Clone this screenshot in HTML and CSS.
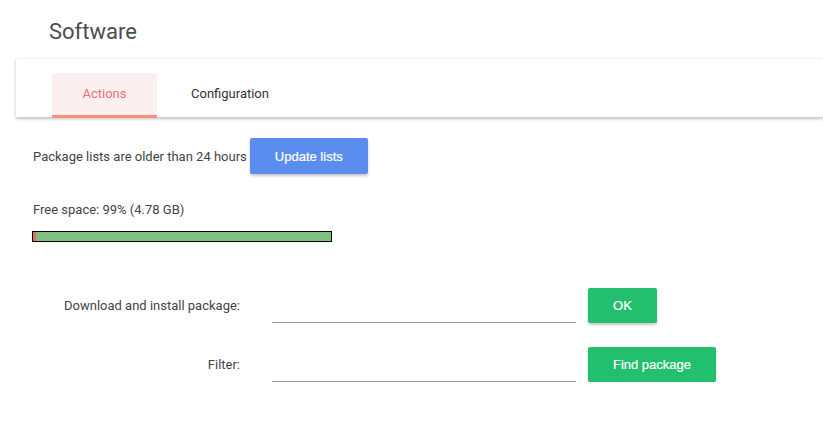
FILE: index.html
```html
<!DOCTYPE html>
<html>
<head>
<meta charset="utf-8">
<link rel="stylesheet" href="styles.css">
</head>
<body>
<h1 class="title">Software</h1>
<div class="card">
  <div class="tabs">
    <div class="tab active">Actions</div>
    <div class="tab">Configuration</div>
  </div>
</div>
<div class="content">
  <div class="update-row">
    <span class="msg">Package lists are older than 24 hours</span>
    <button class="btn btn-blue">Update lists</button>
  </div>
  <div class="free">Free space: 99% (4.78 GB)</div>
  <div class="bar"><div class="used" style="width:1%"></div><div class="freebar"></div></div>
  <div class="form">
    <label class="lbl">Download and install package:</label>
    <input class="field" type="text">
    <div><button class="btn btn-green btn-ok">OK</button></div>
    <label class="lbl">Filter:</label>
    <input class="field" type="text">
    <div><button class="btn btn-green btn-find">Find package</button></div>
  </div>
</div>
</body>
</html>
```
FILE: styles.css
```css
html, body {
  margin: 0;
  padding: 0;
  background: #fff;
  font-family: Roboto, "Noto Sans", sans-serif;
  color: #3c4043;
}
.title {
  margin: 0;
  padding: 19px 0 0 49px;
  height: 59px;
  box-sizing: border-box;
  font-size: 22px;
  font-weight: 400;
  line-height: 26px;
  color: #4a4d50;
}
.card {
  margin-left: 16px;
  height: 59px;
  background: #fff;
  box-shadow: 0 1px 3px rgba(0,0,0,0.25);
  border-bottom: 1px solid #d0d0d0;
  box-sizing: border-box;
}
.tabs {
  display: flex;
  gap: 4px;
  padding: 14px 0 0 36px;
}
.tab {
  height: 45px;
  box-sizing: border-box;
  padding: 0 30px;
  font-size: 13px;
  line-height: 42px;
  color: #333;
  border-bottom: 3px solid transparent;
}
.tab.active {
  width: 105px;
  text-align: center;
  padding: 0;
  background: #fcefef;
  color: #ea6f74;
  border-bottom-color: #f8907c;
}
.content {
  padding: 19px 0 0 33px;
  font-size: 13px;
  color: #444;
}
.update-row {
  display: flex;
  align-items: center;
  gap: 3px;
  height: 38px;
}
.btn {
  border: none;
  border-radius: 2px;
  color: #fff;
  font-family: "Liberation Sans", Arial, sans-serif;
  font-size: 13px;
  font-weight: 500;
  cursor: pointer;
  box-shadow: 0 2px 3px rgba(0,0,0,0.22);
  -webkit-text-stroke: 0.2px #fff;
}
.btn-blue {
  width: 118px;
  height: 36px;
  background: #5b8def;
}
.free {
  margin-top: 27px;
  line-height: 16px;
}
.bar {
  display: flex;
  margin: 13px 0 0 -1px;
  width: 300px;
  height: 11px;
  border: 1px solid #000;
  box-sizing: border-box;
}
.used {
  background: #e66a6a;
}
.freebar {
  flex: 1;
  background: #7fc080;
}
.form {
  display: grid;
  grid-template-columns: 207px 304px auto;
  column-gap: 32px;
  row-gap: 23px;
  margin-top: 45px;
  align-items: center;
}
.form > div {
  margin-left: -20px;
}
.lbl {
  text-align: right;
  font-size: 13px;
  color: #444;
}
.field {
  border: none;
  border-bottom: 1px solid #9e9e9e;
  height: 36px;
  outline: none;
  background: transparent;
  box-sizing: border-box;
  width: 304px;
  align-self: end;
}
.btn-green {
  background: #22bf6e;
  height: 35px;
}
.btn-ok {
  width: 69px;
}
.btn-find {
  width: 128px;
}
```
